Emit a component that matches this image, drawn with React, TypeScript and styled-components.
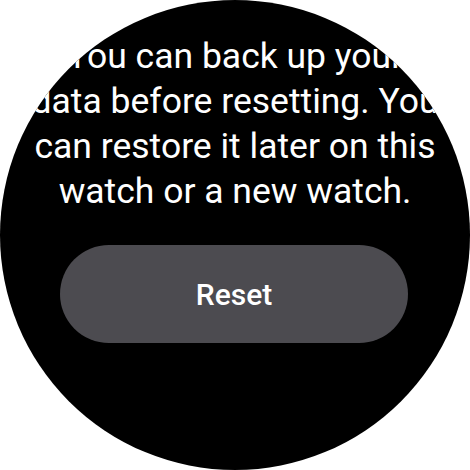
import React from 'react';
import styled, { createGlobalStyle } from 'styled-components';

const GlobalStyle = createGlobalStyle`
  html, body {
    margin: 0;
    padding: 0;
    background: #ffffff;
  }
`;

const Watch = styled.div`
  width: 470px;
  height: 470px;
  border-radius: 50%;
  background: #000000;
  overflow: hidden;
  display: flex;
  flex-direction: column;
  align-items: center;
  padding-top: 34px;
  box-sizing: border-box;
  font-family: Roboto, 'Noto Sans', sans-serif;
`;

const Message = styled.p`
  margin: 0;
  color: #ffffff;
  font-size: 35.5px;
  line-height: 45px;
  text-align: center;
  white-space: nowrap;
`;

const Line = styled.span`
  display: block;
`;

const ResetButton = styled.button`
  margin-top: 31px;
  margin-right: 2px;
  width: 348px;
  height: 98px;
  border: none;
  border-radius: 49px;
  background: #4c4b50;
  color: #ffffff;
  font-family: Roboto, 'Noto Sans', sans-serif;
  font-size: 30px;
  font-weight: 500;
  cursor: pointer;
`;

const lines = [
  'You can back up your',
  'data before resetting. You',
  'can restore it later on this',
  'watch or a new watch.',
];

const App: React.FC = () => {
  return (
    <>
      <GlobalStyle />
      <Watch>
        <Message>
          {lines.map(l => (
            <Line key={l}>{l}</Line>
          ))}
        </Message>
        <ResetButton>Reset</ResetButton>
      </Watch>
    </>
  );
};

export default App;
